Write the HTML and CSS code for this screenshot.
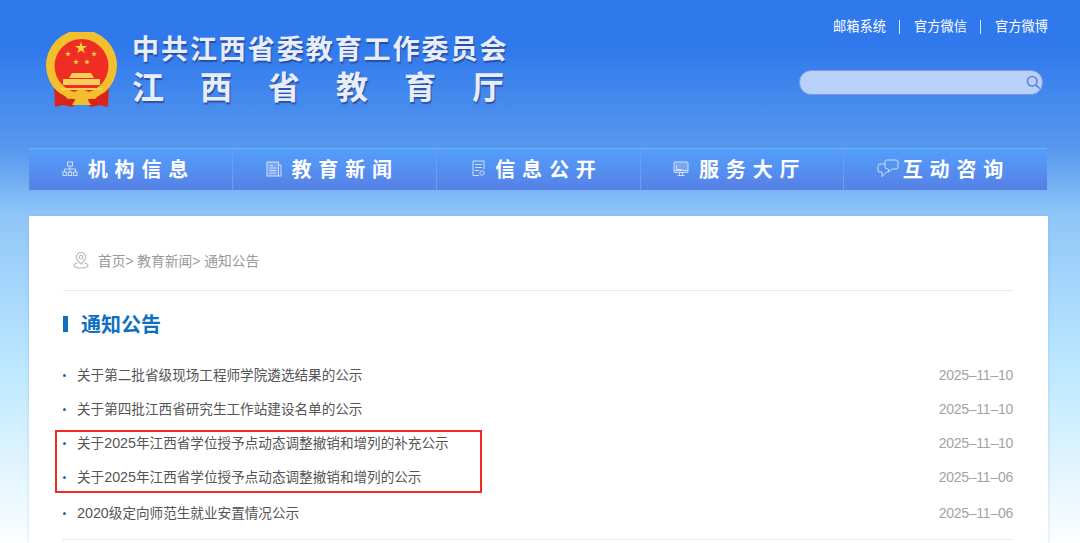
FILE: index.html
```html
<!DOCTYPE html>
<html lang="zh-CN">
<head>
  <meta charset="UTF-8" />
  <meta name="viewport" content="width=device-width, initial-scale=1.0"/>
  <title>通知公告 - 江西省教育厅</title>
  <link rel="stylesheet" href="styles.css">
</head>
<body>

  <header class="topbar">
    <div class="brand">
      <svg class="emblem" viewBox="0 0 72 76" aria-hidden="true">
        <path d="M9 48 L24 62 L34 70 L27 75 L18 73 L10 75 Z M64 48 L49 62 L39 70 L46 75 L55 73 L63 75 Z" fill="#d9241c"/>
        <path d="M13 60 A35.500 35.500 0 1 1 60 60 Q36.500 76 13 60 Z" fill="#f2c02e"/>
        <circle cx="36.500" cy="34" r="27" fill="#ee2e24"/>
        <polygon fill="#f8d53c" transform="translate(36 16) scale(6.400)" points="0,-1 .225,-.309 .951,-.309 .363,.118 .588,.809 0,.382 -.588,.809 -.363,.118 -.951,-.309 -.225,-.309"/>
        <polygon fill="#f8d53c" transform="translate(23 22) scale(3)" points="0,-1 .225,-.309 .951,-.309 .363,.118 .588,.809 0,.382 -.588,.809 -.363,.118 -.951,-.309 -.225,-.309"/>
        <polygon fill="#f8d53c" transform="translate(49 22) scale(3)" points="0,-1 .225,-.309 .951,-.309 .363,.118 .588,.809 0,.382 -.588,.809 -.363,.118 -.951,-.309 -.225,-.309"/>
        <polygon fill="#f8d53c" transform="translate(31 30) scale(3)" points="0,-1 .225,-.309 .951,-.309 .363,.118 .588,.809 0,.382 -.588,.809 -.363,.118 -.951,-.309 -.225,-.309"/>
        <polygon fill="#f8d53c" transform="translate(42 30) scale(3)" points="0,-1 .225,-.309 .951,-.309 .363,.118 .588,.809 0,.382 -.588,.809 -.363,.118 -.951,-.309 -.225,-.309"/>
        <path d="M27 41 H46 L49 46 H24 Z M18 47 H55 V53 H18 Z" fill="#f6cf58"/>
        <path d="M15 56 H58 V58 H15 Z" fill="#f6cf58"/>
        <path d="M17 61 Q27 63 31 59 Q36.500 56 42 59 Q46 63 56 61 L50 67 Q45 67 41 65 L46 73 H27 L32 65 Q28 67 23 67 Z" fill="#f2c02e"/>
      </svg>
      <div class="brand-text">
        <div class="brand-line">中共江西省委教育工作委员会</div>
        <div class="brand-line brand-line-wide">江西省教育厅</div>
      </div>
    </div>
    <div class="tools">
      <nav class="quick-links">
        <a href="#">邮箱系统</a>
        <a href="#">官方微信</a>
        <a href="#">官方微博</a>
      </nav>
      <div class="search">
        <svg class="search-icon" viewBox="0 0 18 18" aria-hidden="true">
          <circle cx="7.500" cy="7.500" r="5.700"/>
          <path d="M11.800 11.800 L16.500 16.500"/>
        </svg>
      </div>
    </div>
  </header>

  <nav class="mainnav">
    <a href="#">
      <svg class="nav-icon icon-org" viewBox="0 0 16 16" aria-hidden="true">
        <rect x="5.500" y="1" width="5" height="4"/><path d="M8 5 V8 M2.500 11 V8 H13.500 V11 M8 8 V11"/>
        <rect x="1" y="11" width="3.400" height="3.500"/><rect x="6.300" y="11" width="3.400" height="3.500"/><rect x="11.600" y="11" width="3.400" height="3.500"/>
      </svg>
      <span>机构信息</span>
    </a>
    <a href="#">
      <svg class="nav-icon icon-doc" viewBox="0 0 16 16" aria-hidden="true">
        <rect x="1" y="1" width="11.500" height="14" fill="rgba(255,255,255,.2)"/><path d="M12.500 4 H15 V15 H12.500 M3.500 4.500 H7 M3.500 7 H10 M3.500 9.500 H10 M3.500 12 H10"/>
      </svg>
      <span>教育新闻</span>
    </a>
    <a href="#">
      <svg class="nav-icon icon-file" viewBox="0 0 13 17" aria-hidden="true">
        <path d="M7 15.500 H1 V1 H12 V9 M3 4.500 H10 M3 7.500 H10 M3 10.500 H7"/><circle cx="10" cy="13" r="2.200"/>
      </svg>
      <span>信息公开</span>
    </a>
    <a href="#">
      <svg class="nav-icon icon-screen" viewBox="0 0 16 16" aria-hidden="true">
        <rect x="1" y="1" width="14" height="10.500" rx="1" fill="rgba(255,255,255,.2)"/><path d="M3.500 4 V8.500 H9 M1 9.500 H15 M6.500 11.500 V14.500 M9.500 11.500 V14.500 M4.500 14.500 H11.500"/>
      </svg>
      <span>服务大厅</span>
    </a>
    <a href="#" class="nav-tight">
      <svg class="nav-icon icon-chat" viewBox="0 0 22 19" aria-hidden="true">
        <path d="M8 5 H3 Q1 5 1 7.500 V11 Q1 13 3 13 H5 V17.500 L9.500 13 H11"/>
        <path d="M9.500 1 H19 Q21 1 21 3 V8 Q21 10 19 10 H15 L11.500 13 V10 Q8 10 8 8 V3 Q8 1 9.500 1 Z"/>
      </svg>
      <span>互动咨询</span>
    </a>
  </nav>

  <main class="panel">
    <div class="crumbs">
      <svg class="crumbs-icon" viewBox="0 0 16 17" aria-hidden="true">
        <path d="M8 12 C5 9 3.300 7.200 3.300 5.200 A4.700 4.700 0 0 1 12.700 5.200 C12.700 7.200 11 9 8 12 Z"/>
        <circle cx="8" cy="5.200" r="1.800"/>
        <path d="M4.500 11 C2 11.500 1 12.500 1 13.500 C1 15 4 16 8 16 C12 16 15 15 15 13.500 C15 12.500 14 11.500 11.500 11"/>
      </svg>
      <span>首页&gt; 教育新闻&gt; 通知公告</span>
    </div>

    <h2 class="section-title">通知公告</h2>

    <ul class="notices">
      <li><a href="#">关于第二批省级现场工程师学院遴选结果的公示</a><span class="date">2025–11–10</span></li>
      <li><a href="#">关于第四批江西省研究生工作站建设名单的公示</a><span class="date">2025–11–10</span></li>
      <li><a href="#">关于<span class="num">2025</span>年江西省学位授予点动态调整撤销和增列的补充公示</a><span class="date">2025–11–10</span></li>
      <li><a href="#">关于<span class="num">2025</span>年江西省学位授予点动态调整撤销和增列的公示</a><span class="date">2025–11–06</span></li>
      <li class="after-mark"><a href="#"><span class="num">2020</span>级定向师范生就业安置情况公示</a><span class="date">2025–11–06</span></li>
      <li class="red-mark" aria-hidden="true"></li>
    </ul>
  </main>

</body>
</html>
```

FILE: styles.css
```css
* {
  box-sizing: border-box;
}

body {
  margin: 0;
  padding: 0 32px 0 29px;
  font-family: "Liberation Sans", "Noto Sans CJK SC", sans-serif;
  background: linear-gradient(180deg, #2f79ec 0, #2f79ec 45px, #5898ee 150px, #8fc6f8 215px, #bde8ff 370px, #e2f5ff 470px, #fdfeff 543px);
  color: #555;
}

a {
  color: inherit;
  text-decoration: none;
}

/* Header */
.topbar {
  display: flex;
  justify-content: space-between;
  height: 148px;
}

.brand {
  display: flex;
  padding: 32px 0 0 16px;
}

.emblem {
  width: 72px;
  height: 76px;
}

.brand-text {
  margin: 2px 0 0 15px;
}

.brand-line {
  font-size: 27px;
  font-weight: 700;
  line-height: 32px;
  letter-spacing: 1.950px;
  color: #e8eef9;
  white-space: nowrap;
  text-shadow: 1px 2px 1px rgba(35, 60, 140, 0.7);
}

.brand-line-wide {
  margin-top: 2px;
  font-size: 32px;
  line-height: 40px;
  letter-spacing: 36px;
}

.tools {
  display: flex;
  flex-direction: column;
  align-items: flex-end;
}

.quick-links {
  display: flex;
  margin-top: 20px;
  font-size: 13.250px;
  line-height: 14px;
  color: #fff;
}

.quick-links a + a {
  margin-left: 13px;
  padding-left: 14px;
  border-left: 1px solid #dfe9fb;
}

.search {
  display: flex;
  justify-content: flex-end;
  align-items: center;
  width: 244px;
  height: 25px;
  margin: 36px 5px 0 0;
  padding-right: 1px;
  background-color: #b8d1f9;
  border: 1px solid #7f94e4;
  border-radius: 12px;
}

.search-icon {
  width: 15px;
  height: 15px;
  fill: none;
  stroke: #5f82dc;
  stroke-width: 2;
}

/* Main nav */
.mainnav {
  display: grid;
  grid-template-columns: 203px repeat(4, 1fr);
  height: 42px;
  margin-right: 1px;
  background: linear-gradient(180deg, #539ffc 0, #5680e4 100%);
  border-top: 1px solid #6fb2f8;
}

.mainnav a {
  display: flex;
  justify-content: flex-end;
  align-items: center;
  gap: 10px;
  padding: 0 37px 2px 0;
  font-size: 20px;
  font-weight: 700;
  letter-spacing: 6.800px;
  color: #fff;
  white-space: nowrap;
}

.mainnav a + a {
  border-left: 1px solid #6e9bee;
}

.mainnav .nav-tight {
  gap: 4px;
}

.nav-icon {
  flex: none;
  fill: none;
  stroke: #cfdffb;
  stroke-width: 1;
}

.icon-org {
  width: 16px;
  height: 16px;
}

.icon-doc {
  width: 16px;
  height: 16px;
}

.icon-file {
  width: 13px;
  height: 17px;
}

.icon-screen {
  width: 16px;
  height: 16px;
}

.icon-chat {
  width: 22px;
  height: 19px;
}

/* Content */
.panel {
  margin-top: 26px;
  padding: 32px 35px 3px 34px;
  background-color: #fff;
  box-shadow: 0 0 3px rgba(120, 150, 190, 0.35);
}

.crumbs {
  display: flex;
  align-items: center;
  gap: 9px;
  height: 43px;
  padding: 0 0 18px 10px;
  font-size: 13.750px;
  color: #999;
  border-bottom: 1px solid #e8e8e8;
}

.crumbs-icon {
  width: 16px;
  height: 17px;
  fill: none;
  stroke: #bbb;
  stroke-width: 1.200;
}

.section-title {
  position: relative;
  margin: 22px 0 0;
  padding-left: 18px;
  font-size: 20px;
  font-weight: 700;
  line-height: 24px;
  color: #1070c0;
}

.section-title::before {
  content: "";
  position: absolute;
  left: 0;
  top: 3px;
  width: 5px;
  height: 16px;
  background-color: #0f6fc0;
}

.notices {
  position: relative;
  margin: 21px 0 0;
  padding: 0 0 9px;
  list-style: none;
  border-bottom: 1px dotted #ddd;
}

.notices li {
  position: relative;
  display: flex;
  justify-content: space-between;
  align-items: center;
  height: 34px;
  padding-left: 14px;
  font-size: 13.600px;
}

.notices li::before {
  content: "";
  position: absolute;
  left: 0;
  top: 16px;
  width: 3px;
  height: 3px;
  border-radius: 50%;
  background-color: #1070c0;
}

.notices li a {
  margin-bottom: 2px;
}

.notices .after-mark {
  margin-top: 2px;
}

.num {
  font-size: 14.300px;
}

.date {
  font-size: 14px;
  letter-spacing: -0.250px;
  color: #a3a3a3;
}

/* red frame drawn over rows 3 and 4 */
.notices .red-mark {
  position: absolute;
  left: -8px;
  top: 72px;
  width: 427px;
  height: 63px;
  padding: 0;
  border: 2px solid #f02a1f;
}

.notices .red-mark::before {
  display: none;
}
```
